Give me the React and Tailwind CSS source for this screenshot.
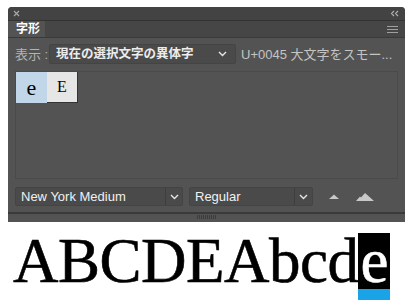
import React from "react";

const Chevron = () => (
  <svg width="9" height="6" viewBox="0 0 9 6" className="block">
    <polyline points="1,1 4.5,4.5 8,1" fill="none" stroke="#e6e6e6" strokeWidth="1.4" />
  </svg>
);

export default function App() {
  const sans = { fontFamily: '"Liberation Sans", "Noto Sans CJK JP", sans-serif' };
  return (
    <div className="w-[414px] h-[308px] bg-white overflow-hidden relative" style={sans}>
      <div className="pt-[7px] pl-[8px] pr-[9px]">
        <div className="h-[215px] flex flex-col rounded-t-[4px] overflow-hidden bg-[#535353]">
          {/* title bar */}
          <div className="h-[14px] bg-[#434343] flex items-center justify-between pl-[5px] pr-[6px] border-b border-[#333]">
            <svg width="7" height="7" viewBox="0 0 7 7"><path d="M1 1L6 6M6 1L1 6" stroke="#a8a8a8" strokeWidth="1.2" /></svg>
            <svg width="9" height="7" viewBox="0 0 9 7"><path d="M4 1L1.5 3.5L4 6M8 1L5.5 3.5L8 6" fill="none" stroke="#b0b0b0" strokeWidth="1.1" /></svg>
          </div>
          {/* tab row */}
          <div className="h-[17px] bg-[#464646] flex items-stretch justify-between border-b border-[#3a3a3a]">
            <div className="w-[37px] bg-[#535353] flex items-center pl-[8px] text-[12px] font-bold text-white leading-none">字形</div>
            <div className="flex flex-col justify-center gap-[2px] pr-[7px]">
              <div className="w-[11px] h-[1px] bg-[#a0a0a0]" />
              <div className="w-[11px] h-[1px] bg-[#a0a0a0]" />
              <div className="w-[11px] h-[1px] bg-[#a0a0a0]" />
            </div>
          </div>
          {/* body */}
          <div className="flex-1 flex flex-col px-[7px]">
            <div className="mt-[6px] h-[20px] flex items-center">
              <span className="text-[13px] text-[#b4b4b4] leading-none w-[34px] whitespace-nowrap">表示 :</span>
              <div className="w-[187px] h-[20px] bg-[#4a4a4a] border border-[#444] rounded-[2px] flex items-center justify-between pl-[6px] pr-[8px]">
                <span className="text-[12.5px] font-bold text-[#ececec] leading-none">現在の選択文字の異体字</span>
                <Chevron />
              </div>
              <span className="ml-[5px] text-[13px] text-[#c4c4c4] leading-none whitespace-nowrap">U+0045 大文字をスモー...</span>
            </div>
            <div className="mt-[7px] h-[108px] border border-[#4a4a4a] flex items-start">
              <div className="w-[31px] h-[31px] bg-[#c2d6ea] flex items-center justify-center text-[22px] text-black" style={{ fontFamily: '"Liberation Serif", serif' }}>e</div>
              <div className="w-[31px] h-[31px] bg-[#e6e6e6] border-r border-b border-[#333] flex items-center justify-center text-[16px] text-black" style={{ fontFamily: '"Liberation Serif", serif' }}>E</div>
            </div>
            <div className="mt-[8px] h-[19px] flex items-center">
              <div className="w-[168px] h-[19px] bg-[#4a4a4a] border border-[#444] rounded-[2px] flex items-stretch">
                <div className="flex-1 flex items-center pl-[5px] text-[13px] text-[#f0f0f0] leading-none">New York Medium</div>
                <div className="w-[17px] border-l border-[#3e3e3e] flex items-center justify-center"><Chevron /></div>
              </div>
              <div className="ml-[6px] w-[124px] h-[19px] bg-[#4a4a4a] border border-[#444] rounded-[2px] flex items-stretch">
                <div className="flex-1 flex items-center pl-[5px] text-[13px] text-[#f0f0f0] leading-none">Regular</div>
                <div className="w-[18px] border-l border-[#3e3e3e] flex items-center justify-center"><Chevron /></div>
              </div>
              <svg className="ml-[16px]" width="10" height="5" viewBox="0 0 10 5"><path d="M0 5L4 1.5L5 0.5L6 1.5L10 5Z" fill="#c8c8c8" /></svg>
              <svg className="ml-[17px]" width="18" height="8" viewBox="0 0 18 8"><path d="M0 8L4 3.5L5 4.5L9 0L13 3.5L18 8Z" fill="#c8c8c8" /></svg>
            </div>
          </div>
          <div className="h-[2px] bg-[#3a3a3a] mt-[6px]" />
          <div className="h-[8px] bg-[#535353] flex justify-center pt-[1px]">
            <div className="flex gap-[1px]">
              {[0,1,2,3,4,5,6,7,8,9].map(i => <div key={i} className="w-[1px] h-[4px] bg-[#3c3c3c]" />)}
            </div>
          </div>
        </div>
      </div>
      <div className="pl-[13px] mt-[11px] flex items-start text-black leading-none" style={{ fontFamily: '"Liberation Serif", serif' }}>
        <span className="text-[63px] leading-[56px] tracking-[-0.5px] [-webkit-text-stroke:0.6px_black]">ABCDEAbcd</span>
        <span className="flex flex-col">
          <span className="bg-black text-white text-[63px] leading-[56px] px-[2px] [-webkit-text-stroke:0.6px_white]">e</span>
          <span className="h-[11px] bg-[#1aa3e6]" />
        </span>
      </div>
    </div>
  );
}
